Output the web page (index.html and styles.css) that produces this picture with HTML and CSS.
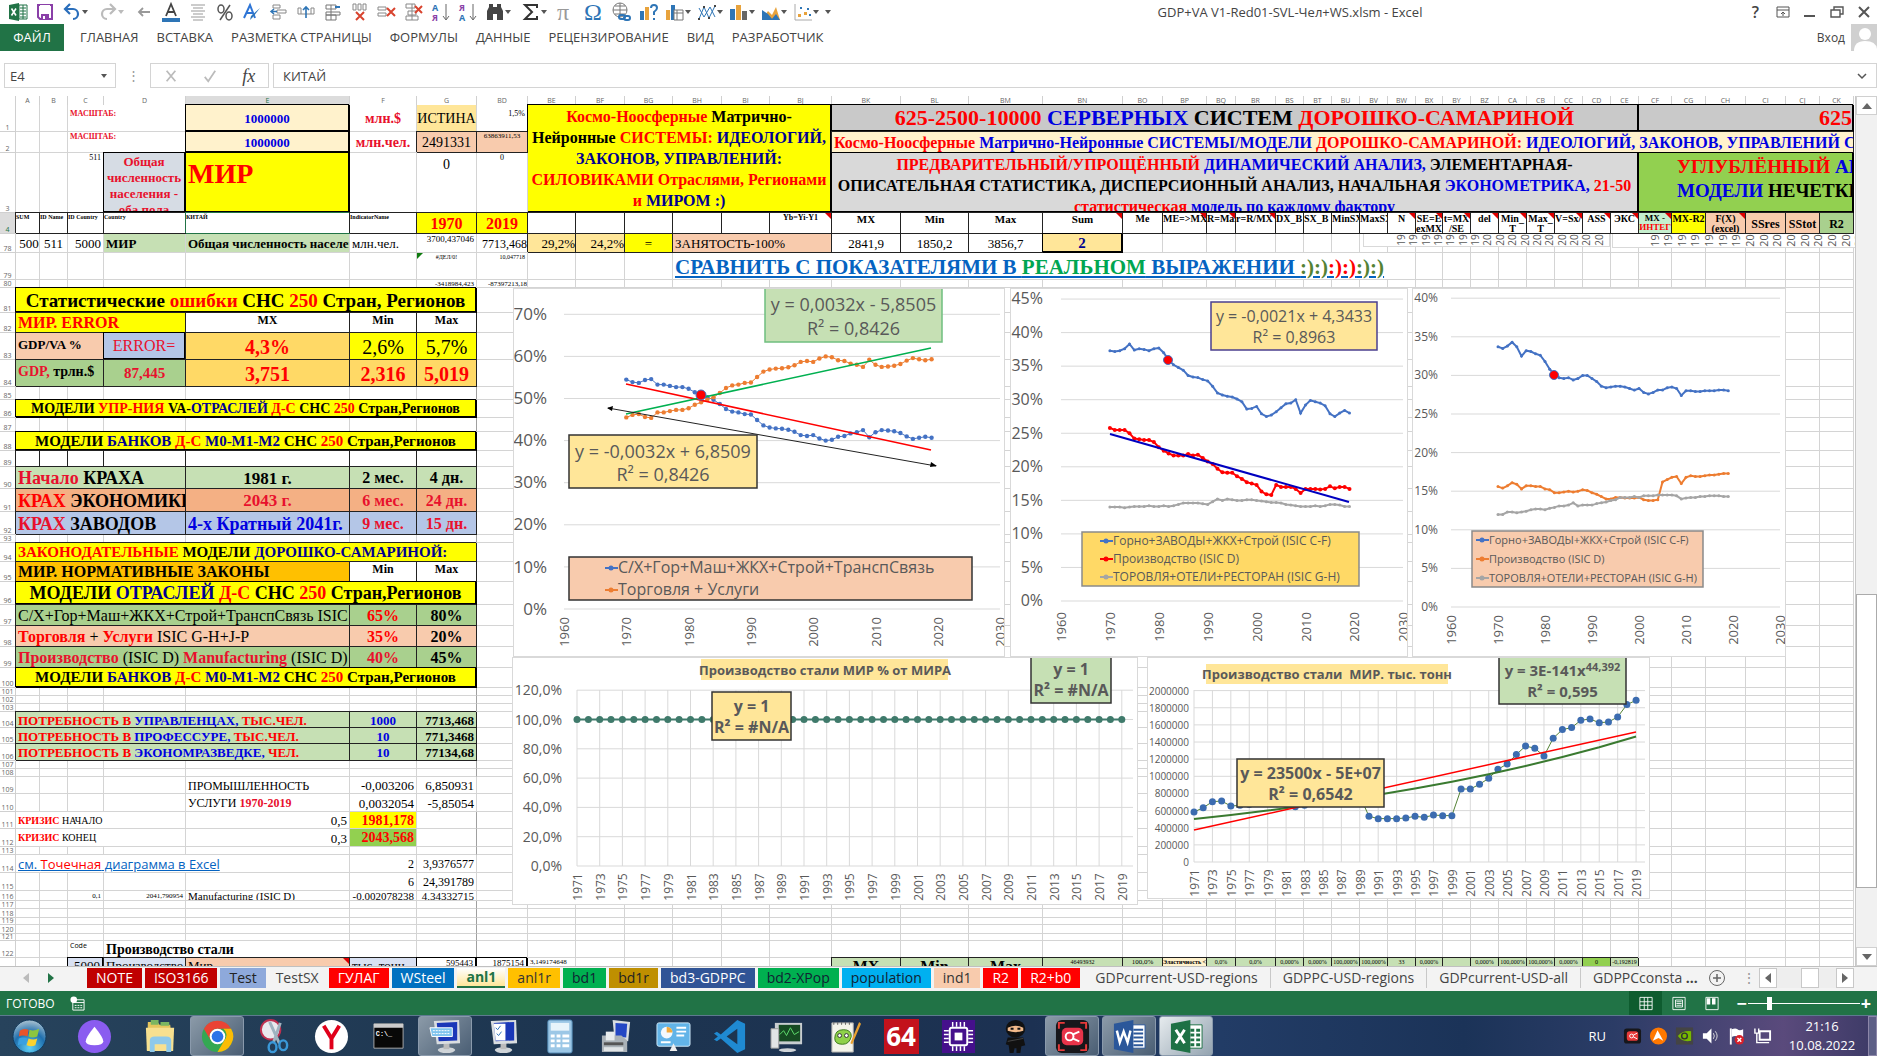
FILE: index.html
```html
<!DOCTYPE html>
<html lang="ru">
  <head>
    <meta charset="UTF-8" />
    <title>GDP+VA V1-Red01-SVL-Чел+WS.xlsm - Excel</title>
    <link rel="stylesheet" href="styles.css">
  </head>
  <body>
    <header class="titlebar">
      <div class="quick">
        <button aria-label="Excel"><svg viewBox="0 0 20 20"><path d="M1 3l10-2v18L1 17z" fill="#217346"/><path d="M11 3h8v14h-8z" fill="#fff" stroke="#217346"/><path d="M12 6h6M12 9h6M12 12h6M12 15h6M15 3v14" stroke="#217346"/><path d="M3.500 6.500l4.500 7M8 6.500l-4.500 7" stroke="#fff" stroke-width="1.600"/></svg></button>
        <button aria-label="Сохранить"><svg viewBox="0 0 20 20"><path d="M3 3h14v14H5l-2-2z" fill="none" stroke="#8a3fa8" stroke-width="2"/><path d="M5 3h10v6H5z" fill="#fff"/><path d="M6 12h8v6H6z" fill="#8a3fa8"/><path d="M8 14h2v3H8z" fill="#fff"/></svg></button>
        <button class="wide" aria-label="Отменить"><svg viewBox="0 0 20 20"><path d="M3 7h8a5 5 0 0 1 0 10M8 2L3 7l5 5" fill="none" stroke="#2a6ebb" stroke-width="2.200"/></svg><i></i></button>
        <button class="wide pale" aria-label="Вернуть"><svg viewBox="0 0 20 20"><path d="M17 7H9a5 5 0 0 0 0 10M12 2l5 5-5 5" fill="none" stroke="#bbb" stroke-width="2.200"/></svg><i></i></button>
        <button aria-label="Назад"><svg viewBox="0 0 20 20"><path d="M16 10H5M9 6l-4 4 4 4" fill="none" stroke="#999" stroke-width="1.800"/></svg></button>
        <button aria-label="Цвет текста"><svg viewBox="0 0 20 20"><path d="M5 14L10 2l5 12M7 10h6" fill="none" stroke="#444" stroke-width="1.800"/><path d="M1 16h18v4H1z" fill="#2e75b6"/></svg></button>
        <button aria-label="По центру"><svg viewBox="0 0 20 20"><path d="M3 3h14M5 6h10M3 9h14M5 12h10M3 15h14M5 18h10" stroke="#999"/></svg></button>
        <button aria-label="Процент"><svg viewBox="0 0 20 20"><g fill="none" stroke="#555" stroke-width="1.500"><ellipse cx="6" cy="7" rx="3" ry="4"/><ellipse cx="14" cy="14" rx="3" ry="4"/><path d="M15 3L5 18"/></g></svg></button>
        <button aria-label="Стиль"><svg viewBox="0 0 20 20"><path d="M2 16L8 3l5 13M4 11h7" fill="none" stroke="#2e75d6" stroke-width="2"/><path d="M18 6l-7 9-3 3 1-4z" fill="#2e75b6"/></svg></button>
        <button aria-label="Вставить ячейки"><svg viewBox="0 0 20 20"><path d="M4 3h7v3H4zM8 8h9v3H8zM4 13h7v4H4z" fill="none" stroke="#888"/><path d="M8 9.500H2M5 7L2 9.500 5 12" stroke="#2e75b6" stroke-width="1.500" fill="none"/></svg></button>
        <button aria-label="Вставить столбец"><svg viewBox="0 0 20 20"><path d="M2 6h3v6H2zM15 6h3v6h-3zM5 12h10" fill="none" stroke="#888"/><path d="M10 16V5M7 8l3-3 3 3" stroke="#2e75b6" stroke-width="1.600" fill="none"/></svg></button>
        <button aria-label="Вставить лист"><svg viewBox="0 0 20 20"><path d="M3 3h10v4H3zM3 10h14v3H3zM3 13h10v5H3zM8 3v15" fill="none" stroke="#777"/><path d="M17 5h-5" stroke="#2e75b6" stroke-width="2"/></svg></button>
        <button aria-label="Удалить столбец"><svg viewBox="0 0 20 20"><path d="M3 2h3v6H3zM8 2h3v6H8zM13 2h3v6h-3z" fill="none" stroke="#888"/><path d="M6 10l8 8M14 10l-8 8" stroke="#d8432e" stroke-width="2"/></svg></button>
        <button aria-label="Удалить строку"><svg viewBox="0 0 20 20"><path d="M1 5h8v3H1zM1 11h8v3H1z" fill="none" stroke="#888"/><path d="M10 6l8 8M18 6l-8 8" stroke="#d8432e" stroke-width="2"/></svg></button>
        <button aria-label="Удалить ячейки"><svg viewBox="0 0 20 20"><path d="M2 2h9v4H2zM4 9h8v4H4zM2 14h12v4H2zM8 2v16" fill="none" stroke="#888"/><path d="M11 4l7 7M18 4l-7 7" stroke="#d8432e" stroke-width="2"/></svg></button>
        <button aria-label="Сортировка А-Я"><svg viewBox="0 0 20 20"><text x="1" y="9" class="t-blue">А</text><text x="1" y="19" class="t-violet">Я</text><path d="M15 2v15M12 14l3 4 3-4" fill="none" stroke="#666"/></svg></button>
        <button aria-label="Сортировка Я-А"><svg viewBox="0 0 20 20"><text x="1" y="9" class="t-violet">Я</text><text x="1" y="19" class="t-blue">А</text><path d="M15 2v15M12 14l3 4 3-4" fill="none" stroke="#666"/></svg></button>
        <button class="wide" aria-label="Найти"><svg viewBox="0 0 20 20"><path d="M4 2h4v3h4V2h4v3l2 4v9h-6v-6H8v6H2V9l2-4z" fill="#444"/></svg><i></i></button>
        <button class="wide" aria-label="Сумма"><svg viewBox="0 0 20 20"><path d="M16 6V3H4l7 7-7 7h12v-3" fill="none" stroke="#333" stroke-width="2"/></svg><i></i></button>
        <button class="glyph gray" aria-label="Формула">π</button>
        <button class="glyph blue" aria-label="Символ">Ω</button>
        <button aria-label="Гиперссылка"><svg viewBox="0 0 20 20"><circle cx="9" cy="8" r="7" fill="none" stroke="#777"/><path d="M2 8h14M9 1v14M4 4h10M4 12h10" stroke="#777" fill="none"/><rect x="8" y="13" width="6" height="4" rx="2" fill="none" stroke="#2e75b6" stroke-width="2"/><rect x="13" y="14" width="6" height="4" rx="2" fill="none" stroke="#2e75b6" stroke-width="2"/></svg></button>
        <button aria-label="Рекомендуемые диаграммы"><svg viewBox="0 0 20 20"><path d="M2 9h4v9H2z" fill="#2e75b6"/><path d="M7 5h4v13H7z" fill="#e8a33d"/><path d="M13 6q0-3 3-3t3 3q0 2-3 4v3" fill="none" stroke="#2e75b6" stroke-width="2"/><path d="M15 16h2v2h-2z" fill="#2e75b6"/></svg></button>
        <button class="drop" aria-label="Сводная диаграмма"><svg viewBox="0 0 20 20"><path d="M1 8h4v10H1z" fill="#e8a33d"/><path d="M6 3h4v15H6z" fill="#2e75b6"/><path d="M9 8h9v10H9zM9 11h9M12 8v10" fill="#fff" stroke="#777"/></svg><i></i></button>
        <button class="drop" aria-label="График"><svg viewBox="0 0 20 20"><path d="M2 17L7 5l5 11 6-12M2 6l5 9 6-10 5 10" fill="none" stroke="#2e75b6"/><path d="M1 16h2v2H1zM6 4h2v2H6zM11 15h2v2h-2zM17 3h2v2h-2z" fill="#444"/></svg><i></i></button>
        <button class="drop" aria-label="Гистограмма"><svg viewBox="0 0 20 20"><path d="M1 7h5v11H1z" fill="#2e75b6"/><path d="M7 3h5v15H7z" fill="#e8a33d"/><path d="M13 9h5v9h-5z" fill="#666"/></svg><i></i></button>
        <button class="drop" aria-label="С областями"><svg viewBox="0 0 20 20"><path d="M1 18L7 9l4 4 4-8 4 13z" fill="#e8a33d"/><path d="M1 18V8l6 4 5 6z" fill="#2e75b6"/><path d="M10 18l5-6 4 6z" fill="#2e75b6"/></svg><i></i></button>
        <button class="drop" aria-label="Точечная"><svg viewBox="0 0 20 20"><path d="M2 2v16h17" fill="none" stroke="#aaa"/><g fill="#e8a33d"><path d="M5 12h3v3H5zM11 10h3v3h-3z"/></g><g fill="#2e75b6"><path d="M7 5h2v2H7zM14 6h2v2h-2zM16 12h2v2h-2z"/></g></svg><i></i></button>
        <button class="more" aria-label="Настройка панели"><i></i></button>
      </div>
      <h1 class="title">GDP+VA V1-Red01-SVL-Чел+WS.xlsm - Excel</h1>
      <div class="window-buttons">
        <button class="help" aria-label="Справка">?</button>
        <button aria-label="Параметры ленты"><svg viewBox="0 0 14 14"><path d="M1 2h12v10H1zM1 5h12M7 11V7M5 9l2-2 2 2" fill="none" stroke="#555"/></svg></button>
        <button aria-label="Свернуть"><svg viewBox="0 0 14 14"><path d="M1 11h11" stroke="#555" stroke-width="2"/></svg></button>
        <button aria-label="Развернуть"><svg viewBox="0 0 14 14"><path d="M1 5h9v7H1zM4 5V2h9v7h-3" fill="none" stroke="#555" stroke-width="1.400"/></svg></button>
        <button aria-label="Закрыть"><svg viewBox="0 0 14 14"><path d="M2 2l10 10M12 2L2 12" stroke="#555" stroke-width="2"/></svg></button>
      </div>
    </header>

    <nav class="ribbon">
      <button class="file">ФАЙЛ</button>
      <button>ГЛАВНАЯ</button>
      <button>ВСТАВКА</button>
      <button>РАЗМЕТКА СТРАНИЦЫ</button>
      <button>ФОРМУЛЫ</button>
      <button>ДАННЫЕ</button>
      <button>РЕЦЕНЗИРОВАНИЕ</button>
      <button>ВИД</button>
      <button>РАЗРАБОТЧИК</button>
      <a class="signin" href="#">Вход</a>
      <svg class="avatar" viewBox="0 0 26 27"><path d="M0 0h26v27H0z" fill="#d0d0d0"/><circle cx="14" cy="10" r="6" fill="#fff"/><path d="M3 27q0-10 11-10t12 8v2z" fill="#fff"/></svg>
    </nav>

    <div class="formula-bar">
      <div class="name-box">
        <input aria-label="Имя ячейки" value="E4">
        <button aria-label="Список имён"><i></i></button>
      </div>
      <span class="dots">⋮</span>
      <div class="formula-buttons">
        <button aria-label="Отмена"><svg viewBox="0 0 16 16"><path d="M3 2l10 12M13 2L3 14" stroke="#bbb" stroke-width="2"/></svg></button>
        <button aria-label="Ввод"><svg viewBox="0 0 16 16"><path d="M2 9l4 5 8-12" fill="none" stroke="#bbb" stroke-width="2"/></svg></button>
        <button class="fx" aria-label="Вставить функцию">fx</button>
      </div>
      <div class="formula">
        <input aria-label="Строка формул" value="КИТАЙ">
        <button aria-label="Развернуть строку"><svg viewBox="0 0 10 10"><path d="M1 3l4 4 4-4" fill="none" stroke="#555" stroke-width="1.500"/></svg></button>
      </div>
    </div>

    <main class="workspace">
      <div class="sheet">
        <table class="grid" id="grid"></table>
        <figure class="chart behind-1"><svg id="behind1"></svg></figure>
        <figure class="chart behind-2"><svg id="behind2"></svg></figure>
        <figure class="chart shares"><svg id="shares"></svg></figure>
        <figure class="chart industry"><svg id="industry"></svg></figure>
        <figure class="chart industry-usd"><svg id="industryUsd"></svg></figure>
        <figure class="chart steel-share"><svg id="steelShare"></svg></figure>
        <figure class="chart steel"><svg id="steel"></svg></figure>
      </div>
      <div class="vscroll">
        <button aria-label="Вверх"><i class="up"></i></button>
        <div class="track"><div class="thumb"></div></div>
        <button aria-label="Вниз"><i class="down"></i></button>
      </div>
    </main>

    <nav class="sheet-tabs">
      <button class="step dim" aria-label="Предыдущий лист"><i class="left"></i></button>
      <button class="step" aria-label="Следующий лист"><i class="right"></i></button>
      <button class="tab darkred">NOTE</button>
      <button class="tab darkred">ISO3166</button>
      <button class="tab steelblue">Test</button>
      <button class="tab none">TestSX</button>
      <button class="tab red">ГУЛАГ</button>
      <button class="tab blue">WSteel</button>
      <button class="tab active">anl1</button>
      <button class="tab gold">anl1r</button>
      <button class="tab green">bd1</button>
      <button class="tab brown">bd1r</button>
      <button class="tab navy">bd3-GDPPC</button>
      <button class="tab green">bd2-XPop</button>
      <button class="tab sky">population</button>
      <button class="tab peach">ind1</button>
      <button class="tab red">R2</button>
      <button class="tab red">R2+b0</button>
      <button class="tab plain">GDPcurrent-USD-regions</button>
      <button class="tab plain">GDPPC-USD-regions</button>
      <button class="tab plain">GDPcurrent-USD-all</button>
      <button class="tab plain last">GDPPCconsta <b>...</b></button>
      <button class="add" aria-label="Новый лист"><svg viewBox="0 0 18 18"><circle cx="9" cy="9" r="7.500" fill="none" stroke="#666"/><path d="M9 5v8M5 9h8" stroke="#666" stroke-width="1.500"/></svg></button>
      <span class="dots">⋮</span>
      <div class="hscroll">
        <button aria-label="Влево"><i class="left"></i></button>
        <div class="hthumb"></div>
        <button aria-label="Вправо"><i class="right"></i></button>
      </div>
    </nav>

    <footer class="status">
      <span>ГОТОВО</span>
      <svg class="macro" viewBox="0 0 16 16"><path d="M3 4h12v11H3z" fill="none" stroke="#fff"/><path d="M3 7h12M5 10h2M8 10h2M11 10h2M5 12.500h2M8 12.500h2M11 12.500h2" stroke="#fff"/><circle cx="4" cy="4" r="3.500" fill="#fff"/></svg>
      <div class="views">
        <button class="on" aria-label="Обычный"><svg viewBox="0 0 16 16"><path d="M1 1h14v14H1zM1 6h14M1 10h14M6 1v14M10 1v14" fill="none" stroke="#fff"/></svg></button>
        <button aria-label="Разметка страницы"><svg viewBox="0 0 16 16"><path d="M1 1h14v14H1zM4 4h8v8H4zM5 6h6M5 8h6M5 10h6" fill="none" stroke="#fff"/></svg></button>
        <button aria-label="Страничный"><svg viewBox="0 0 16 16"><path d="M1 1h14v14H1z" fill="none" stroke="#fff"/><path d="M2 2h4v7H2zM8 2h4v7H8z" fill="#fff"/></svg></button>
      </div>
      <span class="sign">−</span>
      <input class="zoom" type="range" min="10" max="400" value="80" aria-label="Масштаб">
      <span class="sign">+</span>
    </footer>

    <nav class="taskbar">
      <button class="start" aria-label="Пуск"><svg viewBox="0 0 36 36"><defs><radialGradient id="orb" cx=".5" cy=".85" r=".8"><stop offset="0" stop-color="#5fd0f5"/><stop offset=".6" stop-color="#1f6fae"/><stop offset="1" stop-color="#9ab8cc"/></radialGradient></defs><circle cx="18" cy="18" r="17" fill="url(#orb)" stroke="#123a5c"/><path d="M8 12q4-3 9-1l-1 7q-5-2-9 0z" fill="#e8542a"/><path d="M18 11q4 2 10-1l-2 8q-5 2-9 0z" fill="#8cc63f"/><path d="M7 20q4-2 9 0l-2 7q-4-2-8 0z" fill="#3aa0e0"/><path d="M17 20q5 2 9 0l-2 7q-4 2-9 0z" fill="#fbd22f"/></svg></button>
      <button class="alice" aria-label="Алиса"><svg viewBox="0 0 36 36"><circle cx="18" cy="18" r="17" fill="#8a5cf0"/><path d="M18 8q9 11 9 15t-9 4-9-4 9-15z" fill="#fff"/></svg></button>
      <button aria-label="Проводник"><svg viewBox="0 0 36 36"><path d="M5 3h10l2 3h11l3 26H4z" fill="#e6c65c"/><path d="M8 1h8v5H8zM18 3h9v4h-9z" fill="#7bb661"/><path d="M3 9h29l-1 24H4z" fill="#f7e08f"/><path d="M7 34V22q0-4 5-4h12q5 0 5 4v12h-5v-8H12v8z" fill="#8ec9ea"/></svg></button>
      <button class="open" aria-label="Chrome"><svg viewBox="0 0 36 36"><circle cx="18" cy="18" r="16" fill="#34a853"/><path d="M4 10a16 16 0 0 1 28 0H18a8 8 0 0 0-7 12z" fill="#ea4335"/><path d="M32 10a16 16 0 0 1-14 24l7-12a8 8 0 0 0-1-12z" fill="#fbbc05"/><circle cx="18" cy="18" r="8" fill="#fff"/><circle cx="18" cy="18" r="6" fill="#2a73e8"/></svg></button>
      <button aria-label="Ножницы"><svg viewBox="0 0 36 36"><ellipse cx="14" cy="11" rx="10" ry="10" fill="#e9e9ee" stroke="#c03050" stroke-width="2"/><path d="M13 3l10 22M24 4l-7 20" stroke="#9fb3c0" stroke-width="3"/><ellipse cx="16" cy="29" rx="4" ry="5" fill="none" stroke="#3a98d8" stroke-width="2.500"/><ellipse cx="27" cy="27" rx="4" ry="5" fill="none" stroke="#3a98d8" stroke-width="2.500"/></svg></button>
      <button aria-label="Яндекс"><svg viewBox="0 0 36 36"><circle cx="18" cy="18" r="17" fill="#fff"/><path d="M10 7l8 13 8-13M18 19v12" fill="none" stroke="#e0001a" stroke-width="4"/></svg></button>
      <button aria-label="Командная строка"><svg viewBox="0 0 36 36"><path d="M3 5h30v25H3z" fill="#080808" stroke="#aaa"/><path d="M3 5h30v4H3z" fill="#ccc"/><text x="5" y="17" class="cmd">C:\_</text></svg></button>
      <button class="open" aria-label="Экранная клавиатура"><svg viewBox="0 0 36 36"><ellipse cx="19" cy="32" rx="9" ry="3" fill="#cfd4d8"/><path d="M16 24h6v7h-6z" fill="#bbb"/><path d="M6 2l26-1 1 24-24 1z" fill="#d9dde0"/><path d="M9 4l21-1v19l-19 1z" fill="#1b38b8"/><path d="M2 9h23v9H4z" fill="#7fc4ee" stroke="#fff"/><path d="M5 12h18M5 15h18" stroke="#fff" stroke-dasharray="2 1"/></svg></button>
      <button aria-label="Система"><svg viewBox="0 0 36 36"><ellipse cx="19" cy="32" rx="9" ry="3" fill="#cfd4d8"/><path d="M16 24h6v7h-6z" fill="#bbb"/><path d="M6 2l26-1 1 24-24 1z" fill="#d9dde0"/><path d="M9 4l21-1v19l-19 1z" fill="#1b38b8"/><path d="M9 5h12v17H11z" fill="#fff"/><path d="M11 9l2 2 3-4M12 15l2 2 3-4" fill="none" stroke="#2a6ebb"/></svg></button>
      <button aria-label="Калькулятор"><svg viewBox="0 0 36 36"><rect x="6" y="1" width="25" height="34" rx="2" fill="#9cc7e6" stroke="#4f86b0"/><path d="M9 4h19v8H9z" fill="#e8f4fb"/><path d="M9 16h4v3H9zM15 16h4v3h-4zM21 16h7v3h-7zM9 21h4v3H9zM15 21h4v3h-4zM21 21h7v3h-7zM9 26h4v3H9zM15 26h4v3h-4zM21 26h7v3h-7z" fill="#fff"/></svg></button>
      <button aria-label="Принтер"><svg viewBox="0 0 36 36"><path d="M14 1l18 2-2 20-14-2z" fill="#d9dde0"/><path d="M17 4l12 1-1 14-11-1z" fill="#2447c4"/><path d="M3 17h20l6 5v12H3z" fill="#aab2b8"/><path d="M7 13h9v9H7z" fill="#e8ecee"/><path d="M5 24h20v3H5z" fill="#555"/><path d="M5 29h20v4H5z" fill="#e0e4e6"/></svg></button>
      <button aria-label="Панель управления"><svg viewBox="0 0 36 36"><rect x="1" y="4" width="34" height="24" rx="2" fill="#62b4e8" stroke="#cfe9fa"/><circle cx="11" cy="14" r="6" fill="#f3f9fd"/><path d="M11 14V8a6 6 0 0 1 6 6z" fill="#f2a93c"/><path d="M21 9h10M21 13h10M21 17h8M5 24h10" stroke="#fff" stroke-width="2"/><path d="M14 33l4-8 4 8z" fill="#eee"/></svg></button>
      <button aria-label="Code"><svg viewBox="0 0 36 36"><path d="M25 1l8 4v26l-8 4L8 20l-4 3-3-2 4-3-4-3 3-2 4 3z" fill="#1f8ad2"/><path d="M25 10v16l-11-8z" fill="#1d3550"/></svg></button>
      <button aria-label="Монитор ресурсов"><svg viewBox="0 0 36 36"><ellipse cx="18" cy="32" rx="9" ry="2" fill="#cfd4d8"/><path d="M5 4h28v22H5z" fill="#c8cdd0"/><path d="M9 6h22v17H9z" fill="#164a22"/><path d="M10 16l4-4 3 5 4-8 4 7 5-3" fill="none" stroke="#5fdc6c"/><path d="M1 10h8v20H1z" fill="#e2e4e5" stroke="#999"/></svg></button>
      <button aria-label="Notepad++"><svg viewBox="0 0 36 36"><path d="M5 4h22v30H5z" fill="#f4f4ea" stroke="#aaa"/><path d="M7 3v3M11 3v3M15 3v3M19 3v3M23 3v3" stroke="#666"/><path d="M8 20q0-9 9-9 8 0 8 7-2 8-9 8-8 0-8-6z" fill="#8fd14a" stroke="#3b7a1a"/><circle cx="13" cy="17" r="2" fill="#fff" stroke="#333"/><circle cx="20" cy="17" r="2" fill="#fff" stroke="#333"/><path d="M33 3l2 2-9 21-2-1z" fill="#e8a030"/></svg></button>
      <button aria-label="AIDA"><span class="aida">64</span></button>
      <button aria-label="CPU-Z"><svg viewBox="0 0 36 36"><path d="M1 1h34v34H1z" fill="#45108c"/><rect x="9" y="9" width="18" height="18" rx="2" fill="none" stroke="#fff" stroke-width="2"/><path d="M14 14h8v8h-8z" fill="#fff"/><path d="M12 3v5M16 3v5M20 3v5M24 3v5M12 28v5M16 28v5M20 28v5M24 28v5M3 12h5M3 16h5M3 20h5M3 24h5M28 12h5M28 16h5M28 20h5M28 24h5" stroke="#fff" stroke-width="1.500"/></svg></button>
      <button aria-label="Ninja"><svg viewBox="0 0 36 36"><ellipse cx="18" cy="10" rx="10" ry="9" fill="#111"/><path d="M10 9q8-4 16 0v3q-8 3-16 0z" fill="#f1b98a"/><path d="M13 10h3M20 10h3" stroke="#111" stroke-width="2"/><path d="M10 19h16l2 8-4 1-1 7h-4v-5h-2l-1 5h-4l-1-8-3-1z" fill="#111"/><path d="M10 23l16-3" stroke="#444"/></svg></button>
      <button class="open" aria-label="Запись экрана"><svg viewBox="0 0 36 36"><rect x="1" y="1" width="34" height="34" rx="6" fill="#17171b"/><path d="M4 10V4h6M26 4h6v6M32 26v6h-6M10 32H4v-6" fill="none" stroke="#e83a3a" stroke-width="2"/><rect x="7" y="9" width="22" height="18" rx="5" fill="#e8344a"/><circle cx="15" cy="18" r="4" fill="none" stroke="#fff" stroke-width="2"/><path d="M18 16l7-3M18 20l7 3" stroke="#fff" stroke-width="2"/></svg></button>
      <button class="open" aria-label="Word"><svg viewBox="0 0 36 36"><path d="M20 6h14v24H20z" fill="#fff" stroke="#2b579a"/><path d="M22 11h10M22 15h10M22 19h10M22 23h10M22 27h10" stroke="#2b579a" stroke-width="2"/><path d="M2 5l20-4v34L2 31z" fill="#2b579a"/><path d="M5 12l3 12 4-11 4 11 3-12" fill="none" stroke="#fff" stroke-width="2.500"/></svg></button>
      <button class="open current" aria-label="Excel"><svg viewBox="0 0 36 36"><path d="M20 6h14v24H20z" fill="#fff" stroke="#1e7145"/><path d="M22 10h4v3h-4zM28 10h4v3h-4zM22 15h4v3h-4zM28 15h4v3h-4zM22 20h4v3h-4zM28 20h4v3h-4zM22 25h4v3h-4zM28 25h4v3h-4z" fill="#1e7145"/><path d="M2 5l20-4v34L2 31z" fill="#1e7145"/><path d="M7 11l9 14M16 11L7 25" stroke="#fff" stroke-width="3"/></svg></button>
      <div class="tray">
        <span class="lang">RU</span>
        <svg viewBox="0 0 20 20"><rect x="1" y="2" width="18" height="16" rx="3" fill="#17171b"/><rect x="4" y="5" width="12" height="10" rx="3" fill="#e83a3a"/><circle cx="9" cy="10" r="2" fill="none" stroke="#fff"/><path d="M11 9l4-2M11 11l4 2" stroke="#fff"/></svg>
        <svg viewBox="0 0 20 20"><circle cx="10" cy="10" r="9" fill="#ff7800"/><path d="M9 4l6 11-5-3-6 3z" fill="#fff"/></svg>
        <svg viewBox="0 0 20 20"><path d="M1 1h18v18H1z" fill="#444"/><path d="M3 10q5-6 14-5v10Q8 17 3 10z" fill="#76b900"/><circle cx="10" cy="10" r="3" fill="none" stroke="#333" stroke-width="1.500"/></svg>
        <svg viewBox="0 0 20 20"><path d="M2 7h4l5-5v16l-5-5H2z" fill="#fff"/><path d="M13 7q2 3 0 6M15 5q4 5 0 10" fill="none" stroke="#ddd"/></svg>
        <svg viewBox="0 0 20 20"><path d="M4 2v17" stroke="#fff" stroke-width="2"/><path d="M5 3q4-2 6 0t6 0v8q-4 2-6 0t-6 0z" fill="#fff"/><circle cx="13" cy="14" r="5" fill="#d8202a"/><path d="M11 12l4 4M15 12l-4 4" stroke="#fff" stroke-width="1.500"/></svg>
        <svg viewBox="0 0 20 20"><path d="M7 5h11v9H7z" fill="none" stroke="#fff" stroke-width="2"/><path d="M2 2v5h4V2M4 7v10h8M9 17h8" fill="none" stroke="#fff" stroke-width="1.500"/></svg>
        <div class="clock">21:16<br>10.08.2022</div>
      </div>
      <button class="show-desktop" aria-label="Свернуть все окна"></button>
    </nav>
    <script src="script.js"></script>
  </body>
</html>
```

FILE: styles.css
```css
* {
  box-sizing: border-box;
}

body {
  margin: 0;
  height: 100vh;
  display: flex;
  flex-direction: column;
  overflow: hidden;
  background: #fff;
  color: #444;
  font-family: "Open Sans", "Noto Sans", sans-serif;
  font-size: 13px;
}

button {
  border: none;
  background: none;
  padding: 0;
  margin: 0;
  font: inherit;
  color: inherit;
}

input {
  font: inherit;
  color: inherit;
}

/* small triangles */
i {
  width: 0;
  height: 0;
  border: 3px solid transparent;
  border-top: 4px solid #555;
  border-bottom: 0;
}

i.up {
  border: 5px solid transparent;
  border-bottom: 6px solid #666;
  border-top: 0;
}

i.down {
  border: 5px solid transparent;
  border-top: 6px solid #666;
  border-bottom: 0;
}

i.left {
  border: 5px solid transparent;
  border-right: 6px solid #666;
  border-left: 0;
}

i.right {
  border: 5px solid transparent;
  border-left: 6px solid #666;
  border-right: 0;
}

/* Title bar */
.titlebar {
  flex: none;
  height: 24px;
  display: flex;
  align-items: center;
}

.quick {
  display: flex;
  padding-left: 4px;
}

.quick button {
  width: 27px;
  height: 22px;
  padding-left: 4px;
  display: flex;
  align-items: center;
}

.quick .wide {
  width: 36px;
}

.quick .drop {
  width: 32px;
}

.quick svg {
  flex: none;
  width: 20px;
  height: 20px;
  overflow: visible;
}

.quick .pale i {
  border-top-color: #bbb;
}

.quick .glyph {
  font-family: "Liberation Serif", serif;
  font-size: 24px;
  line-height: 22px;
}

.gray {
  color: #999;
}

.blue {
  color: #2e75b6;
}

.t-blue,
.t-violet {
  font-size: 9px;
  font-weight: bold;
  fill: #2e75b6;
}

.t-violet {
  fill: #8a3fa8;
}

.title {
  flex: 1;
  margin: 0;
  padding-right: 10px;
  text-align: center;
  font-size: 13px;
  font-weight: normal;
}

.window-buttons {
  display: flex;
}

.window-buttons button {
  width: 27px;
  display: flex;
  align-items: center;
  justify-content: center;
}

.window-buttons svg {
  width: 14px;
  height: 14px;
}

.help {
  font-size: 16px;
  line-height: 20px;
  font-weight: 600;
}

/* Ribbon */
.ribbon {
  flex: none;
  height: 27px;
  display: flex;
  align-items: center;
}

.ribbon button {
  padding: 0 9px 1px;
  height: 27px;
}

.ribbon .file {
  width: 64px;
  margin-right: 7px;
  background: #217346;
  color: #fff;
}

.signin {
  margin-left: auto;
  margin-right: 6px;
  color: #444;
  text-decoration: none;
  font-size: 12px;
}

.avatar {
  width: 26px;
  height: 27px;
}

/* Formula bar */
.formula-bar {
  flex: none;
  height: 45px;
  padding: 12px 0 8px 4px;
  display: flex;
}

.name-box,
.formula-buttons,
.formula {
  border: 1px solid #d4d4d4;
  display: flex;
  align-items: center;
}

.name-box {
  width: 112px;
}

.name-box input,
.formula input {
  flex: 1;
  min-width: 0;
  border: none;
  background: none;
  padding: 0 5px;
}

.formula input {
  padding: 0 9px;
}

.name-box button {
  display: flex;
  padding-right: 8px;
}

.dots {
  width: 34px;
  text-align: center;
  line-height: 24px;
  color: #999;
}

.formula-buttons {
  width: 119px;
  justify-content: space-around;
}

.formula-buttons svg {
  width: 14px;
  height: 14px;
  display: block;
}

.fx {
  font: italic 18px/20px "Liberation Serif", serif;
}

.formula {
  flex: 1;
  margin-left: 4px;
}

.formula button {
  width: 28px;
}

.formula svg {
  width: 10px;
  height: 10px;
}

/* Worksheet */
.workspace {
  flex: 1;
  min-height: 0;
  display: flex;
}

.sheet {
  flex: 1;
  min-width: 0;
  position: relative;
  overflow: hidden;
}

.grid {
  table-layout: fixed;
  border-collapse: separate;
  border-spacing: 0;
  font-family: "Liberation Serif", serif;
  color: #000;
}

.grid th {
  padding: 0;
  border: solid #d0d0d0;
  border-width: 0 1px 0 0;
  font: 7px/9px "Open Sans", sans-serif;
  color: #666;
  overflow: hidden;
}

.grid tbody th {
  border-width: 0 1px 1px 0;
  vertical-align: bottom;
  line-height: 6px;
}

.grid th.on {
  background: #dcdcdc;
  color: #217346;
}

.grid td {
  padding: 0;
  border: solid #d4d4d4;
  border-width: 0 1px 1px 0;
  position: relative;
}

.grid td.freeze {
  border-right-color: #a0a0a0;
}

.grid td.k {
  border-color: #222;
  box-shadow: -1px -1px 0 #222;
}

.grid td.kk {
  border-color: #000;
  border-width: 0 2px 2px 0;
  box-shadow: -1px -1px 0 #000;
}

.grid td.sel {
  border-color: #217346;
  box-shadow: -1px -1px 0 #217346;
}

/* comment mark in the corner of a cell */
.grid td.note::after {
  content: "";
  position: absolute;
  top: 0;
  right: 0;
  border: 3px solid #e00000;
  border-left-color: transparent;
  border-bottom-color: transparent;
}

.grid td.warn::after {
  content: "";
  position: absolute;
  top: 0;
  left: 0;
  border: 3px solid #107c10;
  border-right-color: transparent;
  border-bottom-color: transparent;
}

.cell {
  display: flex;
  align-items: center;
  overflow: hidden;
  padding: 1px 2px 0;
  white-space: nowrap;
  line-height: 1;
  font-size: 13px;
}

.top .cell {
  align-items: flex-start;
}

.low .cell {
  align-items: flex-end;
}

.center .cell {
  justify-content: center;
  text-align: center;
}

.right .cell {
  justify-content: flex-end;
}

.bold .cell {
  font-weight: bold;
}

.wrap .cell {
  white-space: normal;
}

.flush .cell {
  padding: 1px 0 0;
}

.s6 .cell { font-size: 6px; }
.s7 .cell { font-size: 7px; }
.s8 .cell { font-size: 8px; }
.s9 .cell { font-size: 9px; }
.s10 .cell { font-size: 10px; }
.s11 .cell { font-size: 11px; }
.s12 .cell { font-size: 12px; }
.s14 .cell { font-size: 14px; }
.s15 .cell { font-size: 15px; }
.s16 .cell { font-size: 16px; }
.s17 .cell { font-size: 17px; }
.s18 .cell { font-size: 18px; }
.s19 .cell { font-size: 19px; }
.s20 .cell { font-size: 20px; }
.s21 .cell { font-size: 21px; }
.s22 .cell { font-size: 22px; }
.s28 .cell { font-size: 28px; }
.lines16 .cell { line-height: 16px; }
.lines21 .cell { line-height: 21px; }
.lines24 .cell { line-height: 24px; }
.lines40 .cell { line-height: 40px; }

.sans .cell {
  font-family: "Open Sans", sans-serif;
}

.indent .cell {
  padding-left: 38px;
  padding-top: 2px;
}

.f-yellow { background: #ffff00; }
.f-mint { background: #c6e0b4; }
.f-green { background: #a9d08e; }
.f-lime { background: #92d050; }
.f-peach { background: #f8cbad; }
.f-orange { background: #f4b084; }
.f-blue { background: #b4c6e7; }
.f-pale { background: #d9e1f2; }
.f-gold { background: #ffd966; }
.f-amber { background: #ffc000; }
.f-sand { background: #ffe699; }
.f-cream { background: #fff2cc; }
.f-slate { background: #d6dce4; }
.f-gray { background: #c9c9c9; }
.f-silver { background: #d9d9d9; }
.f-ice { background: #c6efce; }

.c-r { color: #ff0000; }
.c-c { color: #e8112d; }
.c-b { color: #0000e0; }
.c-n { color: #000090; }
.c-g { color: #00a651; }
.c-o { color: #548235; }

.grid a {
  color: #0563c1;
  text-decoration: underline;
}

/* Charts placed over the cells */
.chart {
  position: absolute;
  margin: 0;
  background: #fff;
  border: 1px solid #d9d9d9;
  overflow: hidden;
}

.chart svg {
  display: block;
  width: 100%;
  height: 100%;
}

.behind-1 { left: 1363px; top: 138px; width: 247px; height: 13px; border-top: 0; }
.behind-2 { left: 1612px; top: 138px; width: 260px; height: 14px; border-top: 0; }
.shares { left: 513px; top: 192px; width: 492px; height: 369px; }
.industry { left: 1010px; top: 192px; width: 398px; height: 369px; }
.industry-usd { left: 1412px; top: 192px; width: 374px; height: 369px; }
.steel-share { left: 512px; top: 561px; width: 626px; height: 248px; }
.steel { left: 1147px; top: 561px; width: 503px; height: 242px; }

.chart text {
  fill: #595959;
  font-family: "Open Sans", sans-serif;
}

.chart .bold {
  font-weight: bold;
}

.chart .gridline {
  stroke: #d9d9d9;
}

.series {
  fill: none;
  stroke-width: 2;
}

.series.thin {
  stroke-width: 1;
}

/* Vertical scroll bar */
.vscroll {
  width: 22px;
  border-left: 1px solid #c8c8c8;
  background: #f1f1f1;
  display: flex;
  flex-direction: column;
}

.vscroll button {
  height: 19px;
  border: 1px solid #d0d0d0;
  background: #fff;
  display: flex;
  align-items: center;
  justify-content: center;
}

.track {
  flex: 1;
  display: flex;
  flex-direction: column;
  padding-top: 479px;
}

.thumb {
  height: 294px;
  border: 1px solid #ababab;
  background: #fff;
}

/* Sheet tabs */
.sheet-tabs {
  flex: none;
  height: 25px;
  padding: 1px 0 3px 15px;
  background: #f3f3f3;
  border-top: 1px solid #c0c0c0;
  display: flex;
  gap: 3px;
  font-size: 14px;
  line-height: 20px;
}

.step {
  width: 22px;
  display: flex;
  align-items: center;
  justify-content: center;
}

.step i.right {
  border-left-color: #217346;
}

.step.dim i {
  border-right-color: #bbb;
}

.tab {
  flex: none;
  padding: 0 9px;
  height: 20px;
  white-space: nowrap;
  color: #fff;
}

.step + .tab {
  margin-left: 22px;
}

.tab.darkred { background: #c00000; }
.tab.steelblue { background: #8ea9db; color: #222; }
.tab.none { color: #444; padding: 0 7px; }
.tab.red { background: #ff0000; }
.tab.blue { background: #0070c0; }
.tab.gold { background: #ffc000; color: #333; }
.tab.green { background: #00b050; color: #123; }
.tab.brown { background: #bf8f00; color: #222; }
.tab.navy { background: #305496; }
.tab.sky { background: #00b0f0; color: #123; }
.tab.peach { background: #f8cbad; color: #333; }

.tab.active {
  background: linear-gradient(#fff, #ffe699);
  color: #217346;
  font-weight: bold;
  border-bottom: 2px solid #217346;
  line-height: 18px;
}

.tab.plain {
  color: #444;
  padding: 0 12px;
  margin-right: -3px;
  border-right: 1px solid #c8c8c8;
}

.tab.plain.last {
  border: none;
  padding-right: 4px;
}

.add {
  width: 20px;
  margin-left: 6px;
}

.add svg {
  width: 18px;
  height: 18px;
  display: block;
}

.sheet-tabs .dots {
  width: 14px;
  margin-left: auto;
  line-height: 20px;
}

.hscroll {
  width: 95px;
  margin-right: 23px;
  display: flex;
  justify-content: space-between;
  background: #eee;
}

.hscroll button,
.hthumb {
  width: 18px;
  border: 1px solid #c8c8c8;
  background: #fff;
  display: flex;
  align-items: center;
  justify-content: center;
}

.hthumb {
  margin-left: 6px;
}

/* Status bar */
.status {
  flex: none;
  height: 24px;
  padding: 0 6px;
  background: #217346;
  color: #fff;
  display: flex;
  align-items: center;
  font-size: 12px;
}

.macro {
  width: 15px;
  height: 15px;
  margin-left: 15px;
}

.views {
  display: flex;
  margin-left: auto;
  margin-right: 8px;
}

.views button {
  width: 33px;
  height: 24px;
  display: flex;
  align-items: center;
  justify-content: center;
}

.views .on {
  background: #0e5c2f;
}

.views svg {
  width: 14px;
  height: 15px;
}

.sign {
  font-size: 18px;
  font-weight: bold;
  line-height: 20px;
}

.zoom {
  width: 112px;
  height: 14px;
  margin: 0 1px;
  appearance: none;
  background: linear-gradient(#fff, #fff) center / 100% 1px no-repeat;
}

.zoom::-webkit-slider-thumb {
  appearance: none;
  width: 5px;
  height: 13px;
  background: #fff;
}

/* Taskbar */
.taskbar {
  flex: none;
  height: 41px;
  border-top: 1px solid #5e7a90;
  background: linear-gradient(90deg, #27435c 0, #1d3550 30%, #1c3152 55%, #223c66 65%, #1b3358 78%, #2b3c66 86%, #5a4a7c 95%, #3c3a66 100%);
  color: #fff;
  display: flex;
  align-items: center;
  gap: 3px;
}

.taskbar button {
  width: 54px;
  height: 40px;
  border-radius: 3px;
  display: flex;
  align-items: center;
  justify-content: center;
}

.taskbar .start {
  width: 58px;
  margin-right: 6px;
}

.taskbar .alice {
  margin-right: 9px;
}

.taskbar button svg {
  width: 35px;
  height: 35px;
}

.taskbar .open {
  border: 1px solid #8a9aac;
  background: linear-gradient(135deg, #8b9aa8, #4a5e74);
}

.taskbar .current {
  background: linear-gradient(135deg, #e6ebee, #93a3b0);
}

.aida {
  width: 35px;
  background: #c3121c;
  font-size: 26px;
  font-weight: bold;
  line-height: 35px;
}

.cmd {
  font: bold 7px "Liberation Mono", monospace;
  fill: #fff;
}

.tray {
  margin-left: auto;
  display: flex;
  align-items: center;
  gap: 7px;
}

.tray svg {
  width: 19px;
  height: 20px;
}

.lang {
  font-size: 13px;
  margin-right: 10px;
}

.clock {
  width: 86px;
  text-align: center;
  font-size: 13px;
  line-height: 19px;
}

.taskbar .show-desktop {
  width: 9px;
  border: 1px solid #8c86a8;
  border-radius: 0;
  background: #5d5f86;
}
```

FILE: script.js
```javascript
const columns = [
  ["A", 24], ["B", 28], ["C", 36], ["D", 82], ["E", 164], ["F", 67], ["G", 60],
  ["BD", 51], ["BE", 48], ["BF", 49], ["BG", 48], ["BH", 49], ["BI", 48], ["BJ", 62],
  ["BK", 69], ["BL", 68], ["BM", 74], ["BN", 80], ["BO", 40], ["BP", 44], ["BQ", 29],
  ["BR", 40], ["BS", 28], ["BT", 28], ["BU", 28], ["BV", 28], ["BW", 28], ["BX", 27],
  ["BY", 28], ["BZ", 28], ["CA", 28], ["CB", 28], ["CC", 28], ["CD", 28], ["CE", 28],
  ["CF", 33], ["CG", 34], ["CH", 40], ["CI", 40], ["CJ", 34], ["CK", 34],
];

// row number, height, cells: [column, colspan, classes, text, rowspan]
// {r|text} paints a part of the text
const rows = [
  [1, 27, [
    ["C", 2, "top bold s8 lines16", "{c|МАСШТАБ:}"],
    ["E", 1, "kk center bold f-cream", "{b|1000000}"],
    ["F", 1, "center bold s14", "{c|млн.$}"],
    ["G", 1, "center f-sand s14 flush", "ИСТИНА"],
    ["BD", 1, "right top s8 lines16", "1,5%"],
    ["BE", 6, "kk center bold f-yellow s16 lines21 flush", "{r|Космо-Ноосферные} Матрично-<br>Нейронные {r|СИСТЕМЫ:} {n|ИДЕОЛОГИЙ,<br>ЗАКОНОВ, УПРАВЛЕНИЙ:}<br>{r|СИЛОВИКАМИ Отраслями, Регионами<br>и} {n|МИРОМ :)}", 3],
    ["BK", 21, "kk center bold f-gray s22", "{r|625-2500-10000} {b|СЕРВЕРНЫХ} СИСТЕМ {r|ДОРОШКО-САМАРИНОЙ}"],
    ["CF", 6, "kk right bold f-gray s22 flush", "{r|625}"],
  ]],
  [2, 21, [
    ["C", 2, "top bold s8", "{c|МАСШТАБ:}"],
    ["E", 1, "kk center bold f-cream", "{b|1000000}"],
    ["F", 1, "center bold s14", "{c|млн.чел.}"],
    ["G", 1, "k center f-peach s14", "2491331"],
    ["BD", 1, "k center top f-peach s7", "63863911,53"],
    ["BK", 27, "k bold f-cream s16", "{r|Космо-Ноосферные} {b|Матрично-Нейронные СИСТЕМЫ/МОДЕЛИ} {r|ДОРОШКО-САМАРИНОЙ:} {b|ИДЕОЛОГИЙ, ЗАКОНОВ, УПРАВЛЕНИЙ СИЛО}"],
  ]],
  [3, 60, [
    ["C", 1, "right top s8", "511"],
    ["D", 1, "kk center top bold wrap f-slate lines16 flush", "{c|Общая численность населения - оба пола}"],
    ["E", 1, "kk top bold f-yellow s28 lines40", "{r|МИР}"],
    ["G", 1, "center top s14 lines21", "0"],
    ["BD", 1, "center top s8", "0"],
    ["BK", 21, "kk center top bold f-silver s16 lines21", "{r|ПРЕДВАРИТЕЛЬНЫЙ/УПРОЩЁННЫЙ} {b|ДИНАМИЧЕСКИЙ АНАЛИЗ,} ЭЛЕМЕНТАРНАЯ-<br>ОПИСАТЕЛЬНАЯ СТАТИСТИКА, ДИСПЕРСИОННЫЙ АНАЛИЗ, НАЧАЛЬНАЯ {b|ЭКОНОМЕТРИКА,} {r|21-50}<br>{r|статистическая} {b|модель по каждому фактору}"],
    ["CF", 6, "kk top bold f-lime s19 lines24 indent", "{r|УГЛУБЛЁННЫЙ} {b|АНАЛИЗ,}<br>{b|МОДЕЛИ} НЕЧЕТКИЕ"],
  ]],
  [4, 21, [
    ["A", 1, "k top bold s6 flush", "SUM"],
    ["B", 1, "k top bold s6 flush", "ID Name"],
    ["C", 1, "k top bold s6 flush", "ID Country"],
    ["D", 1, "k top bold s6 flush", "Country"],
    ["E", 1, "sel top bold s6 flush", "КИТАЙ"],
    ["F", 1, "k top bold s6 flush", "IndicatorName"],
    ["G", 1, "k center bold f-yellow s16", "{r|1970}"],
    ["BD", 1, "k center bold f-yellow s16", "{r|2019}"],
    ["BE", 1, "k", ""], ["BF", 1, "k", ""], ["BG", 1, "k", ""], ["BH", 1, "k", ""], ["BI", 1, "k", ""],
    ["BJ", 1, "k center top bold s8 note", "Yb=Yi-Y1"],
    ["BK", 1, "k center top bold s11", "MX"],
    ["BL", 1, "k center top bold s11", "Min"],
    ["BM", 1, "k center top bold s11", "Max"],
    ["BN", 1, "k center top bold s11 note", "Sum"],
    ["BO", 1, "k center top bold s10", "Me"],
    ["BP", 1, "k top bold s10 note flush", "ME=&gt;MX"],
    ["BQ", 1, "k top bold s10 note flush", "R=Max"],
    ["BR", 1, "k top bold s10 note flush", "r=R/MX"],
    ["BS", 1, "k top bold s10 flush", "DX_B"],
    ["BT", 1, "k top bold s10 flush", "SX_B"],
    ["BU", 1, "k top bold s10 flush", "MinSX"],
    ["BV", 1, "k top bold s10 flush", "MaxSX"],
    ["BW", 1, "k center top bold s10 note", "N"],
    ["BX", 1, "k center top bold s10 note flush", "SE=E<br>exMX"],
    ["BY", 1, "k center top bold s10 note flush", "t=MX<br>/SE"],
    ["BZ", 1, "k center top bold s10 note", "del"],
    ["CA", 1, "k center top bold s10 note flush", "Min_<br>T"],
    ["CB", 1, "k center top bold s10 note flush", "Max_<br>T"],
    ["CC", 1, "k top bold s10 note flush", "V=Sx/"],
    ["CD", 1, "k center top bold s10 note flush", "ASS"],
    ["CE", 1, "k center top bold s10 note flush", "ЭКС"],
    ["CF", 1, "k center top bold s9 note f-ice flush", "MX -<br>{r|ИНТЕГ}"],
    ["CG", 1, "k center top bold s10 f-yellow flush", "MX-R2"],
    ["CH", 1, "k center top bold s10 note f-peach", "F(X)<br>(excel)"],
    ["CI", 1, "k center bold s12 f-peach", "SSres"],
    ["CJ", 1, "k center bold s12 f-peach flush", "SStot"],
    ["CK", 1, "k center bold s12 f-green", "R2"],
  ]],
  [78, 19, [
    ["A", 1, "flush", "&nbsp;5000"],
    ["B", 1, "center", "511"],
    ["C", 1, "right", "5000"],
    ["D", 1, "bold f-mint", "МИР"],
    ["E", 1, "bold f-mint", "Общая численность населения"],
    ["F", 1, "", "млн.чел."],
    ["G", 1, "right top s9", "3700,437046"],
    ["BD", 1, "right s12 flush", "7713,468"],
    ["BE", 1, "k right f-sand flush", "29,2%"],
    ["BF", 1, "k right f-sand flush", "24,2%"],
    ["BG", 1, "k center f-yellow", "="],
    ["BH", 3, "k f-peach", "ЗАНЯТОСТЬ-100%"],
    ["BK", 1, "k center", "2841,9"],
    ["BL", 1, "k center", "1850,2"],
    ["BM", 1, "k center", "3856,7"],
    ["BN", 1, "kk center bold f-sand s15", "{n|2}"],
  ]],
  [79, 27, [
    ["G", 1, "center top s6 warn", "#ДЕЛ/0!"],
    ["BD", 1, "right top s6", "10,047718"],
    ["BH", 16, "low bold s21 lines24", "<a href=\"#\">СРАВНИТЬ С ПОКАЗАТЕЛЯМИ В {g|РЕАЛЬНОМ} ВЫРАЖЕНИИ {o|:):)}{r|:):)}{o|:):)}</a>"],
  ]],
  [80, 8, [
    ["G", 1, "right s7", "-3418984,423"],
    ["BD", 1, "right s7 flush", "-87397213,18"],
  ]],
  [81, 25, [["A", 7, "kk center bold f-yellow s19 flush", "Статистические {r|ошибки} СНС {r|250} Стран, Регионов"]]],
  [82, 20, [
    ["A", 4, "k bold f-yellow s16", "{r|МИР. ERROR}"],
    ["E", 1, "k center top bold s12", "MX"],
    ["F", 1, "k center top bold s12", "Min"],
    ["G", 1, "k center top bold s12", "Max"],
  ]],
  [83, 27, [
    ["A", 3, "k top bold f-peach lines21", "GDP/VA %"],
    ["D", 1, "kk center f-blue s16", "{c|ERROR=}"],
    ["E", 1, "k center bold f-gold s20", "{r|4,3%}"],
    ["F", 1, "k center f-yellow s20", "2,6%"],
    ["G", 1, "k center f-yellow s20", "5,7%"],
  ]],
  [84, 27, [
    ["A", 3, "k top bold f-green s14 lines21", "{c|GDP,} трлн.$"],
    ["D", 1, "k center bold f-green s15", "{c|87,445}"],
    ["E", 1, "k center bold f-gold s20", "{r|3,751}"],
    ["F", 1, "k center bold f-gold s20", "{r|2,316}"],
    ["G", 1, "k center bold f-gold s20", "{r|5,019}"],
  ]],
  [85, 13, []],
  [86, 18, [["A", 7, "kk center bold f-yellow s14", "МОДЕЛИ {r|УПР-НИЯ} VA-{n|ОТРАСЛЕЙ} {r|Д-С} СНС {r|250} Стран,Регионов"]]],
  [87, 14, []],
  [88, 19, [["A", 7, "kk center bold f-yellow s15", "МОДЕЛИ {n|БАНКОВ} {r|Д-С} {n|М0-М1-М2} СНС {r|250} Стран,Регионов"]]],
  [89, 16, [["A", 1, "k", ""], ["B", 1, "k", ""], ["C", 1, "k", ""], ["D", 1, "k", ""], ["E", 1, "k", ""], ["F", 1, "k", ""], ["G", 1, "k", ""]]],
  [90, 22, [
    ["A", 4, "k bold f-mint s18", "{c|Начало} КРАХА"],
    ["E", 1, "k center bold f-mint s17", "1981 г."],
    ["F", 1, "k center bold f-mint s16", "2 мес."],
    ["G", 1, "k center bold f-mint s16", "4 дн."],
  ]],
  [91, 23, [
    ["A", 4, "k bold f-orange s18", "{r|КРАХ} ЭКОНОМИКИ"],
    ["E", 1, "k center bold f-orange s17", "{c|2043 г.}"],
    ["F", 1, "k center bold f-orange s16", "{c|6 мес.}"],
    ["G", 1, "k center bold f-orange s16", "{c|24 дн.}"],
  ]],
  [92, 23, [
    ["A", 4, "k bold f-blue s18", "{c|КРАХ} ЗАВОДОВ"],
    ["E", 1, "k bold f-blue s18", "{b|4-х Кратный 2041г.}"],
    ["F", 1, "k center bold f-blue s16", "{c|9 мес.}"],
    ["G", 1, "k center bold f-blue s16", "{c|15 дн.}"],
  ]],
  [93, 8, []],
  [94, 19, [["A", 7, "k bold f-yellow s15", "{r|ЗАКОНОДАТЕЛЬНЫЕ} МОДЕЛИ {n|ДОРОШКО-САМАРИНОЙ:}"]]],
  [95, 20, [
    ["A", 5, "k bold f-amber s16", "МИР. НОРМАТИВНЫЕ ЗАКОНЫ"],
    ["F", 1, "k center top bold s12", "Min"],
    ["G", 1, "k center top bold s12", "Max"],
  ]],
  [96, 23, [["A", 7, "kk center bold f-yellow s18", "МОДЕЛИ {n|ОТРАСЛЕЙ} {r|Д-С} СНС {r|250} Стран,Регионов"]]],
  [97, 21, [
    ["A", 5, "k f-green s16", "С/Х+Гор+Маш+ЖКХ+Строй+ТранспСвязь ISIC"],
    ["F", 1, "k center bold f-green s16", "{r|65%}"],
    ["G", 1, "k center bold f-green s16", "80%"],
  ]],
  [98, 21, [
    ["A", 5, "k f-peach s16", "<b>{r|Торговля}</b> + <b>{r|Услуги}</b> ISIC G-H+J-P"],
    ["F", 1, "k center bold f-peach s16", "{r|35%}"],
    ["G", 1, "k center bold f-peach s16", "20%"],
  ]],
  [99, 21, [
    ["A", 5, "k f-green s16", "<b>{c|Производство}</b> (ISIC D) <b>{c|Manufacturing}</b> (ISIC D)"],
    ["F", 1, "k center bold f-green s16", "{c|40%}"],
    ["G", 1, "k center bold f-green s16", "45%"],
  ]],
  [100, 20, [["A", 7, "kk center bold f-yellow s15", "МОДЕЛИ {n|БАНКОВ} {r|Д-С} {n|М0-М1-М2} СНС {r|250} Стран,Регионов"]]],
  [101, 8, []],
  [102, 8, []],
  [103, 8, []],
  [104, 16, [
    ["A", 5, "k bold f-mint", "{r|ПОТРЕБНОСТЬ В} {b|УПРАВЛЕНЦАХ,} {r|ТЫС.ЧЕЛ.}"],
    ["F", 1, "k center bold f-mint", "{b|1000}"],
    ["G", 1, "k right bold f-mint", "7713,468"],
  ]],
  [105, 16, [
    ["A", 5, "k bold f-mint", "{r|ПОТРЕБНОСТЬ В} {b|ПРОФЕССУРЕ,} {r|ТЫС.ЧЕЛ.}"],
    ["F", 1, "k center bold f-mint", "{b|10}"],
    ["G", 1, "k right bold f-mint", "771,3468"],
  ]],
  [106, 17, [
    ["A", 5, "k bold f-mint", "{r|ПОТРЕБНОСТЬ В} {b|ЭКОНОМРАЗВЕДКЕ,} {r|ЧЕЛ.}"],
    ["F", 1, "k center bold f-mint", "{b|10}"],
    ["G", 1, "k right bold f-mint", "77134,68"],
  ]],
  [107, 8, []],
  [108, 8, []],
  [109, 17, [
    ["E", 1, "s12", "ПРОМЫШЛЕННОСТЬ"],
    ["F", 1, "right", "-0,003206"],
    ["G", 1, "right", "6,850931"],
  ]],
  [110, 18, [
    ["E", 1, "s12", "УСЛУГИ <b>{c|1970-2019}</b>"],
    ["F", 1, "right", "0,0032054"],
    ["G", 1, "right", "-5,85054"],
  ]],
  [111, 17, [
    ["A", 4, "s10", "<b>{r|КРИЗИС}</b> НАЧАЛО"],
    ["E", 1, "right", "0,5"],
    ["F", 1, "right bold f-yellow s14", "{r|1981,178}"],
  ]],
  [112, 18, [
    ["A", 4, "s10", "<b>{r|КРИЗИС}</b> КОНЕЦ"],
    ["E", 1, "right", "0,3"],
    ["F", 1, "right bold f-lime s14", "{r|2043,568}"],
  ]],
  [113, 8, []],
  [114, 18, [
    ["A", 5, "sans", "<a href=\"#\">см. {r|Точечная} диаграмма в Excel</a>"],
    ["F", 1, "right s12", "2"],
    ["G", 1, "right s12", "3,9376577"],
  ]],
  [115, 18, [["F", 1, "right s12", "6"], ["G", 1, "right s12", "24,391789"]]],
  [116, 10, [
    ["C", 1, "right s7", "0,1"],
    ["D", 1, "right s7", "2041,790954"],
    ["E", 1, "s11", "Manufacturing (ISIC D)"],
    ["F", 1, "right s11", "-0,002078238"],
    ["G", 1, "right s11", "4,34332715"],
  ]],
  [117, 8, []],
  [118, 9, []],
  [119, 7, []],
  [120, 9, []],
  [121, 7, []],
  [122, 17, [
    ["C", 1, "top s7 sans", "Code"],
    ["D", 2, "bold s14", "Производство стали"],
  ]],
  [123, 24, [
    ["C", 1, "kk right top f-pale", "5000"],
    ["D", 1, "k top f-pale", "Производство стали"],
    ["E", 1, "k top f-peach note", "Мир"],
    ["F", 1, "k top f-pale", "тыс. тонн"],
    ["G", 1, "kk right top s9", "595443"],
    ["BD", 1, "kk right top s9", "1875154"],
    ["BE", 1, "top s7", "3,149174648"],
    ["BK", 1, "k center top bold s16 f-mint", "MX"],
    ["BL", 1, "k center top bold s16 f-mint", "Min"],
    ["BM", 1, "k center top bold s16 f-mint", "Max"],
    ["BN", 1, "k center top s6 f-mint", "46493932"],
    ["BO", 1, "k center top s7 f-mint", "100,0%"],
    ["BP", 1, "k top bold s6 f-cream flush", "Эластичность &lt;1"],
    ["BQ", 1, "k center top s6 f-mint", "0,0%"],
    ["BR", 1, "k center top s6 f-mint", "0,0%"],
    ["BS", 1, "k center top s6 f-mint", "0,000%"],
    ["BT", 1, "k center top s6 f-mint", "0,000%"],
    ["BU", 1, "k center top s6 f-mint flush", "100,000%"],
    ["BV", 1, "k center top s6 f-mint flush", "100,000%"],
    ["BW", 1, "k center top s6 f-mint", "33"],
    ["BX", 1, "k center top s6 f-mint", "0,000%"],
    ["BY", 1, "k f-mint", ""],
    ["BZ", 1, "k center top s6 f-mint", "0,000%"],
    ["CA", 1, "k center top s6 f-mint flush", "100,000%"],
    ["CB", 1, "k center top s6 f-mint flush", "100,000%"],
    ["CC", 1, "k center top s6 f-mint", "0,000%"],
    ["CD", 1, "k center top s6 f-lime", "0"],
    ["CE", 1, "k center top s6 f-mint flush", "-0,192819"],
  ]],
];

function paint(text) {
  return text.replace(/\{(\w)\|([^}]*)\}/g, '<span class="c-$1">$2</span>');
}

function buildGrid() {
  const grid = document.getElementById("grid");
  const total = columns.reduce((sum, c) => sum + c[1], 16);
  const busy = {};
  let html = '<colgroup><col style="width:16px">';
  html += columns.map((c) => `<col style="width:${c[1]}px">`).join("");
  html += "</colgroup><thead><tr><th></th>";
  html += columns.map((c) => `<th class="${c[0] === "E" ? "on" : ""}">${c[0]}</th>`).join("");
  html += "</tr></thead><tbody>";

  rows.forEach(([number, height, cells], r) => {
    html += `<tr style="height:${height}px"><th class="${number === 4 ? "on" : ""}">${number}</th>`;
    for (let c = 0; c < columns.length; c++) {
      if (busy[r + ":" + c]) continue;
      const cell = cells.find((item) => item[0] === columns[c][0]);
      if (!cell) {
        html += `<td class="${columns[c][0] === "G" ? "freeze" : ""}"></td>`;
        continue;
      }
      const [, colspan, classes, text, rowspan = 1] = cell;
      let inner = 0;
      for (let i = 0; i < rowspan; i++) {
        inner += rows[r + i][1];
        for (let j = 0; j < colspan; j++) busy[r + i + ":" + (c + j)] = true;
      }
      inner -= classes.includes("kk") ? 2 : 1;
      html += `<td class="${classes}" colspan="${colspan}" rowspan="${rowspan}">`;
      html += `<div class="cell" style="height:${inner}px"><span>${paint(text)}</span></div></td>`;
      c += colspan - 1;
    }
    html += "</tr>";
  });
  grid.style.width = total + "px";
  grid.innerHTML = html + "</tbody>";
}

/* ---------- charts ---------- */

const BLUE = "#4472c4";
const ORANGE = "#ed7d31";
const GREY = "#a5a5a5";

function line(x1, y1, x2, y2, color, width = 1) {
  return `<line x1="${x1}" y1="${y1}" x2="${x2}" y2="${y2}" stroke="${color}" stroke-width="${width}"/>`;
}

function label(x, y, text, size, anchor = "end", cls = "") {
  return `<text x="${x}" y="${y}" font-size="${size}" text-anchor="${anchor}" class="${cls}">${text}</text>`;
}

// label turned by 90 degrees, its middle at x, y
function turned(x, y, text, size) {
  return `<text transform="translate(${x} ${y}) rotate(-90)" font-size="${size}" text-anchor="middle" dy="5">${text}</text>`;
}

function box(x, y, w, h, fill, stroke) {
  return `<rect x="${x}" y="${y}" width="${w}" height="${h}" fill="${fill}" stroke="${stroke}" stroke-width="1.5"/>`;
}

function formula(x, y, w, h, fill, stroke, first, second, size, cls = "") {
  const mid = x + w / 2;
  return box(x, y, w, h, fill, stroke) +
    label(mid, y + h / 2 - 4, first, size, "middle", cls) +
    label(mid, y + h - 7, second, size, "middle", cls);
}

function series(values, first, fx, fy, color, radius, cls = "") {
  const points = values.map((v, i) => [fx(first + i).toFixed(1), fy(v).toFixed(1)]);
  return `<polyline class="series ${cls}" stroke="${color}" points="${points.map((p) => p.join(",")).join(" ")}"/>` +
    points.map((p) => `<circle cx="${p[0]}" cy="${p[1]}" r="${radius}" fill="${color}"/>`).join("");
}

function legend(x, y, color, text, size) {
  return line(x, y, x + 13, y, color, 2) + `<circle cx="${x + 6}" cy="${y}" r="2.5" fill="${color}"/>` +
    label(x + 13, y + size / 3, text, size, "start");
}

function draw(id, view, parts) {
  const svg = document.getElementById(id);
  svg.setAttribute("viewBox", view);
  svg.setAttribute("preserveAspectRatio", "xMinYMin slice");
  svg.innerHTML = parts;
}

function percentAxis(left, right, labelX, fy, from, to, step, size) {
  let out = "";
  for (let p = from; p <= to; p += step) {
    out += `<line class="gridline" x1="${left}" x2="${right}" y1="${fy(p)}" y2="${fy(p)}"/>`;
    out += label(labelX, fy(p) + size / 3, p + "%", size);
  }
  return out;
}

function decades(fx, y, size) {
  let out = "";
  for (let year = 1960; year <= 2030; year += 10) out += turned(fx(year), y, year, size);
  return out;
}

function drawShares() {
  const fx = (year) => 564 + (year - 1960) * 6.23;
  const fy = (p) => 609 - p * 4.21;
  const goods = [54.5, 53.9, 53.7, 54.4, 54.6, 53.3, 53.3, 53, 52.7, 52.7, 52.3, 51.5, 50.9, 50.3, 49.7, 48.7, 47.5, 46.9, 46.7, 46.3, 46.2, 44.9, 43.6, 43.1, 42.9, 42.8, 42.6, 42.1, 41.3, 41.1, 41.3, 40.5, 40, 40.2, 40.9, 41.1, 41.7, 42, 42.5, 40.8, 42, 42.5, 42.4, 42.2, 41.8, 41, 40.4, 40.7, 40.9, 40.7];
  const services = goods.map((v) => 100 - v);
  draw("shares", "514 289 490 367",
    percentAxis(564, 1000, 547, fy, 0, 70, 10, 17) +
    decades(fx, 632, 13) +
    series(goods, 1970, fx, fy, BLUE, 2.2, "thin") +
    series(services, 1970, fx, fy, ORANGE, 2.2, "thin") +
    line(626, 384, 931, 450, "#ff0000", 1.5) +
    line(626, 414, 931, 348, "#00b050", 1.5) +
    line(608, 408, 936, 466, "#222") +
    '<path d="M607 408l6-2-1 5zM937 466l-6-4-1 5z" fill="#000"/>' +
    `<circle cx="701" cy="395" r="5" fill="#ff0000" stroke="${BLUE}"/>` +
    formula(765, 288, 177, 54, "#c6e0b4", "#6fbf7f", "y = 0,0032x - 5,8505", "R² = 0,8426", 18) +
    formula(569, 435, 188, 53, "#ffe699", "#333", "y = -0,0032x + 6,8509", "R² = 0,8426", 18) +
    box(569, 557, 403, 43, "#f8cbad", "#333") +
    legend(605, 568, BLUE, "С/Х+Гор+Маш+ЖКХ+Строй+ТранспСвязь", 16) +
    legend(605, 590, ORANGE, "Торговля + Услуги", 16));
}

function drawIndustry() {
  const fx = (year) => 1061 + (year - 1960) * 4.89;
  const fy = (p) => 601 - p * 6.71;
  const all = [37.3, 37.2, 37.3, 37.6, 38.3, 37.4, 37.6, 37.5, 37.3, 37.6, 37.7, 37, 35.9, 35.2, 34.8, 34.4, 33.6, 33.4, 33.3, 33, 32.8, 32, 31, 30.7, 30.5, 30.4, 30.1, 29.7, 28.6, 28.7, 29, 27.9, 27.5, 27.7, 28.2, 28.8, 29.4, 29.5, 30, 28, 29.2, 29.9, 29.7, 29.5, 29.1, 27.9, 27.5, 28, 28.4, 28];
  const making = [25.8, 25.5, 25.5, 25.5, 25, 24.2, 24.1, 24, 24, 23.7, 22.9, 22.4, 22, 21.7, 21.7, 21.7, 21.9, 21.7, 21.8, 21.3, 20.8, 20.4, 19.7, 19.2, 19.1, 19.1, 18.6, 18.2, 17.7, 17.5, 17.3, 16.3, 15.9, 15.8, 17.3, 17, 17, 17, 16.7, 16.1, 16.7, 16.7, 16.7, 16.6, 16.7, 17.1, 16.8, 17, 17, 16.7];
  const trade = [14, 14, 14, 13.9, 14, 14.1, 14.1, 14.1, 14.2, 14.1, 14.1, 14.2, 14.1, 14.2, 14.4, 14.6, 14.6, 14.6, 14.6, 14.5, 14.4, 14.8, 15.2, 15, 15.2, 15.1, 15, 15, 15.1, 15.1, 15, 14.9, 14.8, 14.7, 14.7, 14.6, 14.4, 14.3, 14.2, 14.1, 14.1, 14.1, 14.2, 14.1, 14.2, 14.4, 14.4, 14.3, 14.1, 14.1];
  draw("industry", "1011 289 396 367",
    percentAxis(1061, 1403, 1043, fy, 0, 45, 5, 16) +
    decades(fx, 627, 13) +
    series(all, 1970, fx, fy, BLUE, 1.5) +
    series(making, 1970, fx, fy, "#ff0000", 2) +
    series(trade, 1970, fx, fy, GREY, 1.5) +
    line(1110, 434, 1349, 502, "#0000c0", 2) +
    `<circle cx="1168" cy="360" r="4.5" fill="#ff0000" stroke="${BLUE}"/>` +
    formula(1211, 302, 166, 48, "#ffe699", "#4b3f8f", "y = -0,0021x + 4,3433", "R² = 0,8963", 16) +
    box(1082, 532, 277, 54, "#ffd966", "#8a8a8a") +
    legend(1100, 541, BLUE, "Горно+ЗАВОДЫ+ЖКХ+Строй (ISIC C-F)", 12) +
    legend(1100, 559, "#ff0000", "Производство (ISIC D)", 12) +
    legend(1100, 577, GREY, "ТОРОВЛЯ+ОТЕЛИ+РЕСТОРАН (ISIC G-H)", 12));
}

function drawIndustryUsd() {
  const fx = (year) => 1451 + (year - 1960) * 4.7;
  const fy = (p) => 607 - p * 7.72;
  const all = [33.7, 33.5, 33.8, 34.3, 33.7, 32.5, 33.2, 33.1, 32.8, 32.6, 31.8, 30.8, 30.1, 29.7, 29.6, 29.7, 29.4, 29.6, 30, 30, 29.6, 29.2, 28.6, 28.4, 28.5, 28.6, 28.6, 28.5, 28.3, 28.1, 28.3, 27.8, 27.6, 27.8, 28.1, 28.1, 28.4, 28.5, 28.3, 27.4, 28, 28, 27.9, 27.9, 28, 28, 28, 28.1, 28.1, 28];
  const making = [15.6, 15.4, 15.7, 16.1, 15.9, 15.3, 15.7, 15.7, 15.6, 15.6, 15.3, 15.2, 14.8, 14.8, 14.9, 15, 14.9, 15, 15.2, 15.1, 14.8, 14.6, 14.3, 14, 14, 14.2, 14.2, 14.1, 14.1, 14.1, 14.2, 13.9, 13.8, 13.8, 13.9, 16.2, 16.5, 16.8, 16.9, 16, 16.8, 17, 16.9, 16.9, 17, 17.1, 17.1, 17.2, 17.3, 17.3];
  const trade = [12, 12, 12.3, 12.3, 12.2, 12.3, 12.4, 12.6, 12.7, 12.7, 12.6, 12.8, 12.9, 13.1, 13.1, 13.2, 13.5, 13.1, 13.2, 13.2, 13.2, 13.4, 13.5, 13.6, 13.8, 13.9, 14.2, 14.2, 14.2, 14.3, 14.2, 14.4, 14.4, 14.4, 14.5, 14.5, 14.5, 14.5, 14.4, 14, 14.1, 14.2, 14.2, 14.3, 14.3, 14.4, 14.4, 14.4, 14.3, 14.3];
  draw("industryUsd", "1413 289 372 367",
    percentAxis(1451, 1780, 1438, fy, 0, 40, 5, 12) +
    decades(fx, 630, 13) +
    series(all, 1970, fx, fy, BLUE, 1.5) +
    series(making, 1970, fx, fy, ORANGE, 1.5) +
    series(trade, 1970, fx, fy, GREY, 1.5) +
    `<circle cx="1554" cy="375" r="4.5" fill="#ff0000" stroke="${BLUE}"/>` +
    box(1472, 531, 231, 56, "#f8cbad", "#8a8a8a") +
    legend(1476, 540, BLUE, "Горно+ЗАВОДЫ+ЖКХ+Строй (ISIC C-F)", 11) +
    legend(1476, 559, ORANGE, "Производство (ISIC D)", 11) +
    legend(1476, 578, GREY, "ТОРОВЛЯ+ОТЕЛИ+РЕСТОРАН (ISIC G-H)", 11));
}

function drawSteelShare() {
  const fx = (year) => 577 + (year - 1971) * 11.35;
  const fy = (p) => 866 - p * 1.465;
  let out = "";
  for (let p = 0; p <= 120; p += 20) {
    out += `<line class="gridline" x1="577" x2="1133" y1="${fy(p)}" y2="${fy(p)}"/>`;
    out += label(562, fy(p) + 5, p + ",0%", 14);
  }
  for (let year = 1971; year <= 2019; year += 2) {
    out += `<line class="gridline" x1="${fx(year)}" x2="${fx(year)}" y1="690" y2="866"/>`;
    out += turned(fx(year), 887, year, 12);
  }
  out += series(new Array(49).fill(100), 1971, fx, fy, "#3f7a6b", 3.5);
  out += '<rect x="701" y="659" width="247" height="21" fill="#ffe699"/>';
  out += label(825, 675, "Производство стали МИР % от МИРА", 13, "middle", "bold");
  out += formula(1031, 655, 80, 48, "#c6e0b4", "#333", "y = 1", "R² = #N/A", 16, "bold");
  out += formula(712, 692, 79, 48, "#ffe699", "#333", "y = 1", "R² = #N/A", 16, "bold");
  draw("steelShare", "513 658 624 246", out);
}

function drawSteel() {
  const fx = (year) => 1194 + (year - 1971) * 9.21;
  const fy = (v) => 862 - v * 0.0857;
  const output = [584, 634, 704, 712, 654, 661, 670, 690, 700, 680, 670, 645, 663, 700, 710, 715, 730, 760, 770, 533, 506, 506, 506, 514, 533, 521, 549, 541, 541, 852, 852, 907, 977, 1082, 1144, 1253, 1354, 1327, 1237, 1444, 1545, 1568, 1654, 1669, 1626, 1634, 1693, 1837, 1887];
  let out = "";
  for (let v = 0; v <= 2000; v += 200) {
    out += `<line class="gridline" x1="1194" x2="1645" y1="${fy(v)}" y2="${fy(v)}"/>`;
    out += label(1189, fy(v) + 4, v ? v + "000" : 0, 10);
  }
  for (let year = 1971; year <= 2019; year += 2) {
    out += `<line class="gridline" x1="${fx(year)}" x2="${fx(year)}" y1="690" y2="862"/>`;
    out += turned(fx(year), 883, year, 12);
  }
  const power = [];
  for (let i = 0; i <= 48; i += 4) power.push(fx(1971 + i) + "," + fy(502 * Math.exp(0.0223 * i)));
  out += series(output, 1971, fx, fy, "#548235", 1, "thin");
  out += output.map((v, i) => `<circle cx="${fx(1971 + i)}" cy="${fy(v)}" r="3.5" fill="#3c6cb0"/>`).join("");
  out += `<polyline class="series" stroke="#3a7a30" points="${power.join(" ")}"/>`;
  out += line(1194, 830, 1636, 732, "#ff0000", 1.5);
  out += '<rect x="1206" y="664" width="242" height="20" fill="#ffe699"/>';
  out += label(1327, 679, "Производство стали&#160; МИР. тыс. тонн", 13, "middle", "bold");
  out += formula(1499, 655, 127, 49, "#c6e0b4", "#333", 'y = 3E-141x<tspan dy="-5" font-size="11">44,392</tspan>', "R² = 0,595", 15, "bold");
  out += formula(1237, 759, 147, 48, "#ffe699", "#333", "y = 23500x - 5E+07", "R² = 0,6542", 16, "bold");
  draw("steel", "1148 658 501 240", out);
}

// charts scrolled under the frozen rows, only the ends of the years are seen
function drawBehind(id, left, first, step, count) {
  let out = "";
  for (let i = 0; i < count; i++) out += turned(first + i * step, 240, i < 7 ? 19 : 20, 10);
  draw(id, `${left} 234 250 12`, out);
}

buildGrid();
drawShares();
drawIndustry();
drawIndustryUsd();
drawSteelShare();
drawSteel();
drawBehind("behind1", 1364, 1400, 12.35, 17);
drawBehind("behind2", 1613, 1650, 12.6, 17);
```
